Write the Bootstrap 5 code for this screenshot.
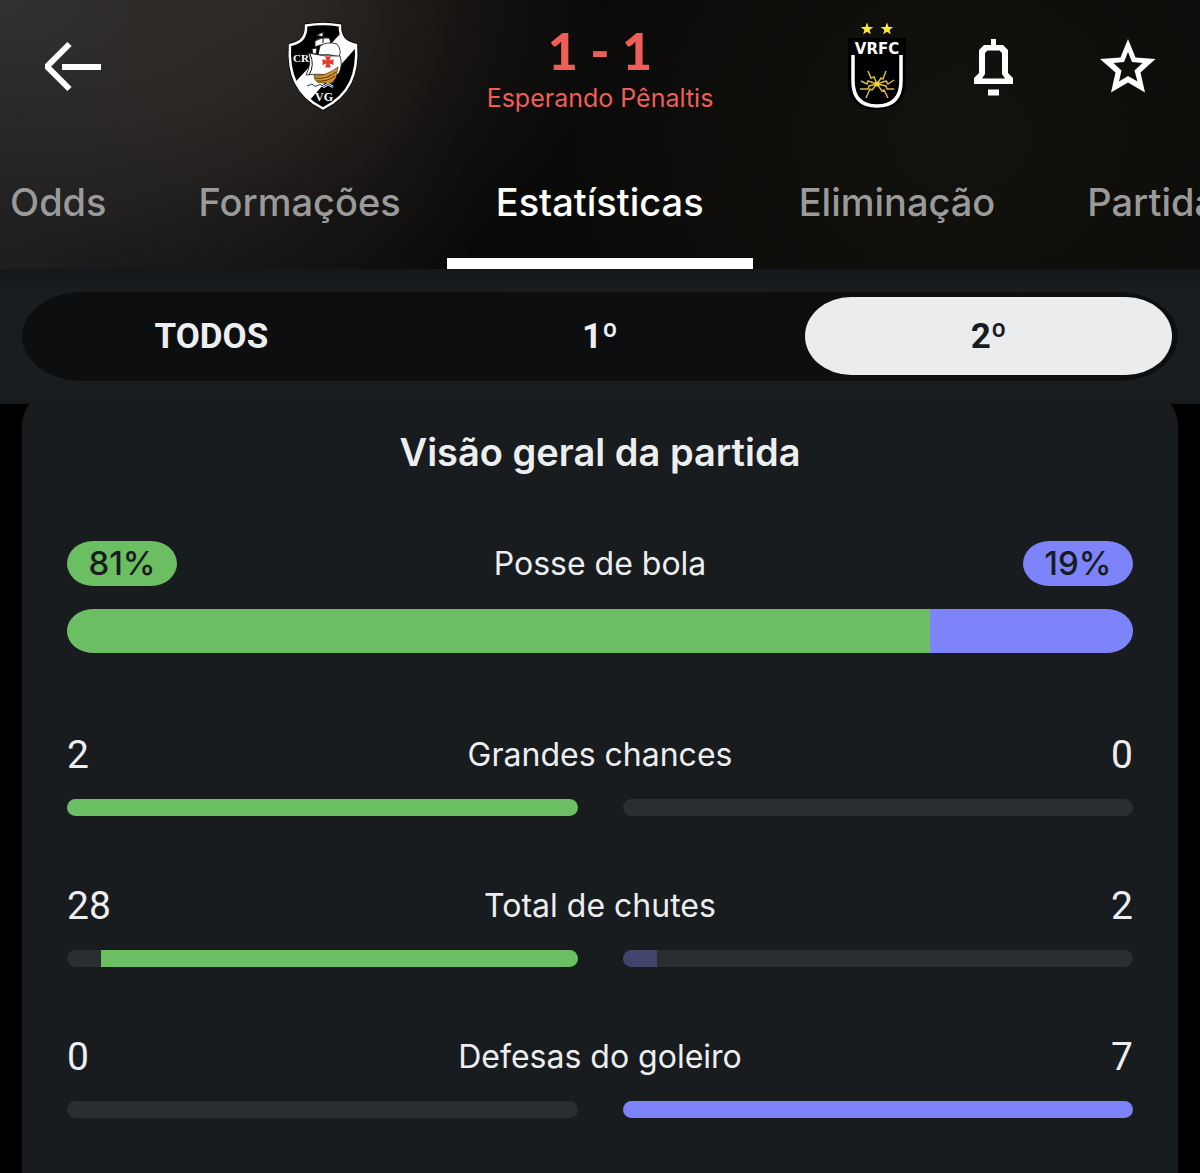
<!DOCTYPE html>
<html lang="pt-BR" data-bs-theme="dark">
<head>
<meta charset="utf-8">
<meta name="viewport" content="width=device-width, initial-scale=1">
<title>Estatísticas</title>
<link href="https://cdn.jsdelivr.net/npm/bootstrap@5.3.0/dist/css/bootstrap.min.css" rel="stylesheet">
<style>
  :root { --home: #6bbf62; --away: #7d83f8; --surface: #191c1f; --ink: #edeef0; }
  body { background: #000; color: var(--ink); font-family: Inter, "Liberation Sans", sans-serif; }
  .match-header {
    background:
      radial-gradient(ellipse 460px 300px at 0 0, rgba(54,52,50,.95), rgba(54,52,50,0)),
      radial-gradient(ellipse 330px 320px at 270px 0, rgba(44,37,33,.9), rgba(44,37,33,0)),
      radial-gradient(ellipse 480px 420px at 0 100%, rgba(30,29,31,.95), rgba(30,29,31,0)),
      radial-gradient(ellipse 450px 400px at 960px 50%, rgba(19,18,13,1), rgba(19,18,13,0)),
      #090909;
  }
  .score-bar { display: grid; grid-template-columns: 1fr auto 1fr; height: 134px; padding: 0 36px; }
  .icon-btn { width: 72px; height: 72px; padding: 0; border: 0; color: #fff; }
  .crest { width: 88px; height: 96px; }
  .score-mid { width: 466px; padding-top: 5px; color: #ee5e58; }
  .score-num { font: 900 52px/52px Lato, sans-serif; }
  .score-sub { margin-top: 4px; font-size: 25px; line-height: 36px; }
  .right-icons { gap: 62px; }
  .tab-strip { overflow-x: auto; scrollbar-width: none; }
  .tab-strip::-webkit-scrollbar { display: none; }
  .tab-strip .nav-link {
    padding: 43px 46px 31px; border-bottom: 11px solid transparent; border-radius: 0;
    font-size: 38px; line-height: 50px; font-weight: 500; color: #9b9a9a; white-space: nowrap;
  }
  .tab-strip .nav-link.active { padding-left: 49px; padding-right: 49px; color: #fff; border-bottom-color: #fff; }
  .period-bar { z-index: 1; padding: 23px 22px; background: linear-gradient(#15171a, #191d20 22px, #191d20 132px, #15181a); }
  .period-group { gap: 22px; padding: 5px 6px 6px; background: #0d0e10; border-radius: 60px / 50%; }
  .period-group .btn {
    flex: 1 1 0; height: 78px; padding: 3px 0 0; border: 0; border-radius: 46px / 50%;
    font-family: Roboto, sans-serif; font-weight: 700; font-size: 35px; color: var(--ink);
  }
  .period-group .btn.active { background: #ebecee; color: #191c1f; }
  .stats-panel { margin: -14px 22px 0; padding: 37px 45px 56px; background: var(--surface); border-radius: 36px 36px 0 0; }
  .panel-title { font-size: 38px; line-height: 50px; font-weight: 600; margin: 0 0 64px; color: var(--ink); }
  .stat-head { display: grid; grid-template-columns: 1fr auto 1fr; align-items: center; }
  .stat-label { font-size: 32px; line-height: 44px; font-weight: 400; margin: 0; color: var(--ink); }
  .stat-value { font-family: Roboto, sans-serif; font-size: 39px; line-height: 48px; }
  .share-pill { width: 110px; border-radius: 26px / 50%; font-size: 33px; line-height: 45px; font-weight: 500; color: #191c1f; }
  .home-fill { background: var(--home); }
  .away-fill { background: var(--away); }
  .dim-fill { background: #42446b; }
  .share-track { height: 44px; margin: 23px 0 78px; border-radius: 26px / 50%; }
  .stat-row + .stat-row { margin-top: 66px; }
  .stat-tracks { gap: 45px; margin-top: 20px; }
  .stat-tracks .progress { flex: 1 1 0; height: 17px; border-radius: 9px; background: #2b2e31; }
</style>
<script src="https://cdn.jsdelivr.net/npm/bootstrap@5.3.0/dist/js/bootstrap.bundle.min.js"></script>
</head>
<body>
<header class="match-header">
  <div class="score-bar align-items-center">
    <div class="d-flex justify-content-between align-items-center">
      <button type="button" class="btn icon-btn" aria-label="Voltar">
        <svg width="72" height="72" viewBox="0 0 72 72" fill="none" stroke="#fff" stroke-width="6" aria-hidden="true"><path d="M33.500 13 12 34.500V36.500L33.500 58M26 36H65"/></svg>
      </button>
      <svg class="crest" viewBox="0 0 88 96" role="img" aria-label="Vasco da Gama">
        <defs><path id="shield" d="M27 6.500Q44 3.500 61 6.500Q60 23 77 26C79 54 71 76 44 89.500C17 76 9 54 11 26Q28 23 27 6.500Z"/><clipPath id="inShield"><use href="#shield"/></clipPath></defs>
        <use href="#shield" fill="#000" stroke="#000" stroke-width="4"/>
        <g clip-path="url(#inShield)"><path d="M6 74 62 14 90 14 22 91Z" fill="#fff"/></g>
        <use href="#shield" fill="none" stroke="#fff" stroke-width="2.500"/>
        <g fill="#fff" stroke="#111" stroke-width=".8" stroke-linejoin="round">
          <path d="M37 17Q41 14 45 13L44 18Q40 16 37 17Z"/>
          <path d="M36 22Q42 18 50 19Q53 23 51 27Q44 24 36 28Z"/>
          <path d="M33 30 38 29 37 35H34Z"/>
          <path d="M41 27Q48 22 58 25Q63 31 60 38Q50 34 39 36Z"/>
          <path d="M29 34Q45 38 61 37Q64 46 60 54Q56 59 52 57Q43 54 27 56Q33 45 29 34Z"/>
        </g>
        <path d="M31 35Q36 46 30 56M44 12V24" stroke="#111" stroke-width="1" fill="none"/>
        <path d="M46 37.500H52L50.500 41.500 54.500 40V46L50.500 44.500 52 48.500H46L47.500 44.500 43.500 46V40L47.500 41.500Z" fill="#e33a30"/>
        <path d="M35 56Q46 58 59 48L57 59 53 64H40Q35 62 35 56Z" fill="#d0922f" stroke="#3a250a" stroke-width=".6"/>
        <path d="M36 59Q47 61 57 53M38 62Q48 63 56 57" stroke="#5b3a10" stroke-width="1" fill="none"/>
        <path d="M28 67 33 65 36 67.500 41 65.500 45 67.500 49 65 54 68" stroke="#fff" stroke-width="2.500" fill="none"/>
        <path d="M28 67 33 65 36 67.500 41 65.500 45 67.500 49 65 54 68" stroke="#26345c" stroke-width="1" fill="none"/>
        <g fill="#fff" font-family="Liberation Serif, serif" font-weight="700" text-anchor="middle"><text x="22" y="43" font-size="11">CR</text><text x="45" y="82" font-size="12">VG</text></g>
      </svg>
    </div>
    <div class="score-mid text-center">
      <div class="score-num">1 - 1</div>
      <div class="score-sub">Esperando Pênaltis</div>
    </div>
    <div class="d-flex justify-content-between align-items-center">
      <svg class="crest" viewBox="0 0 88 96" role="img" aria-label="Volta Redonda">
        <path d="M15 19H73V62Q73 91 44 91Q15 91 15 62Z" fill="#000"/>
        <path d="M0-6.500 1.600-2.100 6.200-2 2.600.900 3.800 5.300 0 2.700-3.800 5.300-2.600.900-6.200-2-1.600-2.100Z" fill="#ffe83a" transform="translate(34 10)"/>
        <path d="M0-6.500 1.600-2.100 6.200-2 2.600.900 3.800 5.300 0 2.700-3.800 5.300-2.600.900-6.200-2-1.600-2.100Z" fill="#ffe83a" transform="translate(54 10)"/>
        <text x="44" y="35" text-anchor="middle" font-family="DejaVu Sans, sans-serif" font-weight="700" font-size="15" fill="#fff">VRFC</text>
        <path d="M20 36V62Q20 87 44 87Q68 87 68 62V36" fill="none" stroke="#fff" stroke-width="3.500"/>
        <path d="M44 65 41 58 38 59 35 52M44 65 48 59 50 60 53 52M44 65 35 62 34 65 28 62M44 65 53 62 55 65 61 61M44 65 36 67 35 70 27 70M44 65 53 67 54 70 61 70M44 65 39 71 37 70 33 79M44 65 49 72 51 71 55 79" fill="none" stroke="#d9b93c" stroke-width="1.500"/>
        <circle cx="44" cy="65" r="2.500" fill="#f0d24a"/>
      </svg>
      <div class="d-flex right-icons">
        <button type="button" class="btn icon-btn" aria-label="Notificações">
          <svg width="72" height="72" viewBox="0 0 72 72" fill="#fff" fill-rule="evenodd" aria-hidden="true"><path d="M33 8H38V14H45L50 19V42L55 47V53H16V47L21 42V19L26 14H33ZM29.500 19.500 27 22V43L24 47.500H47L44 43V22L41.500 19.500ZM30 58.500H41V64.500H30Z"/></svg>
        </button>
        <button type="button" class="btn icon-btn" aria-label="Favoritar">
          <svg width="72" height="72" viewBox="0 0 72 72" fill="#fff" fill-rule="evenodd" aria-hidden="true"><path d="M36 8 43.500 26.500 63.500 28 48.500 41.500 53 61.500 36 51.500 19 61.500 23.500 41.500 8 28 28.500 26.500ZM36 21 32 31 21.500 32 29.500 39.500 27 50.500 36 45 45.500 50.500 42.500 39.500 50.500 32 40 31Z"/></svg>
        </button>
      </div>
    </div>
  </div>
  <nav class="nav flex-nowrap tab-strip position-relative" aria-label="Seções da partida">
    <a class="nav-link" href="#">Odds</a>
    <a class="nav-link" href="#">Formações</a>
    <a class="nav-link active" aria-current="page" href="#">Estatísticas</a>
    <a class="nav-link" href="#">Eliminação</a>
    <a class="nav-link" href="#">Partidas</a>
  </nav>
</header>
<div class="period-bar position-relative">
  <div class="period-group d-flex" role="group" aria-label="Período">
    <button type="button" class="btn">TODOS</button>
    <button type="button" class="btn">1º</button>
    <button type="button" class="btn active" aria-pressed="true">2º</button>
  </div>
</div>
<main class="stats-panel">
  <h1 class="panel-title text-center">Visão geral da partida</h1>
  <section>
    <div class="stat-head">
      <span class="share-pill home-fill text-center">81%</span>
      <h2 class="stat-label">Posse de bola</h2>
      <span class="share-pill away-fill text-center ms-auto">19%</span>
    </div>
    <div class="progress share-track">
      <div class="progress-bar home-fill" style="width:81%"></div>
      <div class="progress-bar away-fill" style="width:19%"></div>
    </div>
  </section>
  <section class="stat-row">
    <div class="stat-head">
      <span class="stat-value">2</span><h2 class="stat-label">Grandes chances</h2><span class="stat-value text-end">0</span>
    </div>
    <div class="stat-tracks d-flex">
      <div class="progress justify-content-end"><div class="progress-bar home-fill" style="width:100%"></div></div>
      <div class="progress"><div class="progress-bar away-fill" style="width:0%"></div></div>
    </div>
  </section>
  <section class="stat-row">
    <div class="stat-head">
      <span class="stat-value">28</span><h2 class="stat-label">Total de chutes</h2><span class="stat-value text-end">2</span>
    </div>
    <div class="stat-tracks d-flex">
      <div class="progress justify-content-end"><div class="progress-bar home-fill" style="width:93.33%"></div></div>
      <div class="progress"><div class="progress-bar dim-fill" style="width:6.67%"></div></div>
    </div>
  </section>
  <section class="stat-row">
    <div class="stat-head">
      <span class="stat-value">0</span><h2 class="stat-label">Defesas do goleiro</h2><span class="stat-value text-end">7</span>
    </div>
    <div class="stat-tracks d-flex">
      <div class="progress justify-content-end"><div class="progress-bar home-fill" style="width:0%"></div></div>
      <div class="progress"><div class="progress-bar away-fill" style="width:100%"></div></div>
    </div>
  </section>
</main>
<script>
  // Keep the active tab in the middle of the scrolling strip
  const strip = document.querySelector('.tab-strip');
  const current = strip.querySelector('.active');
  strip.scrollLeft = current.offsetLeft + current.offsetWidth / 2 - strip.clientWidth / 2;
</script>
</body>
</html>
